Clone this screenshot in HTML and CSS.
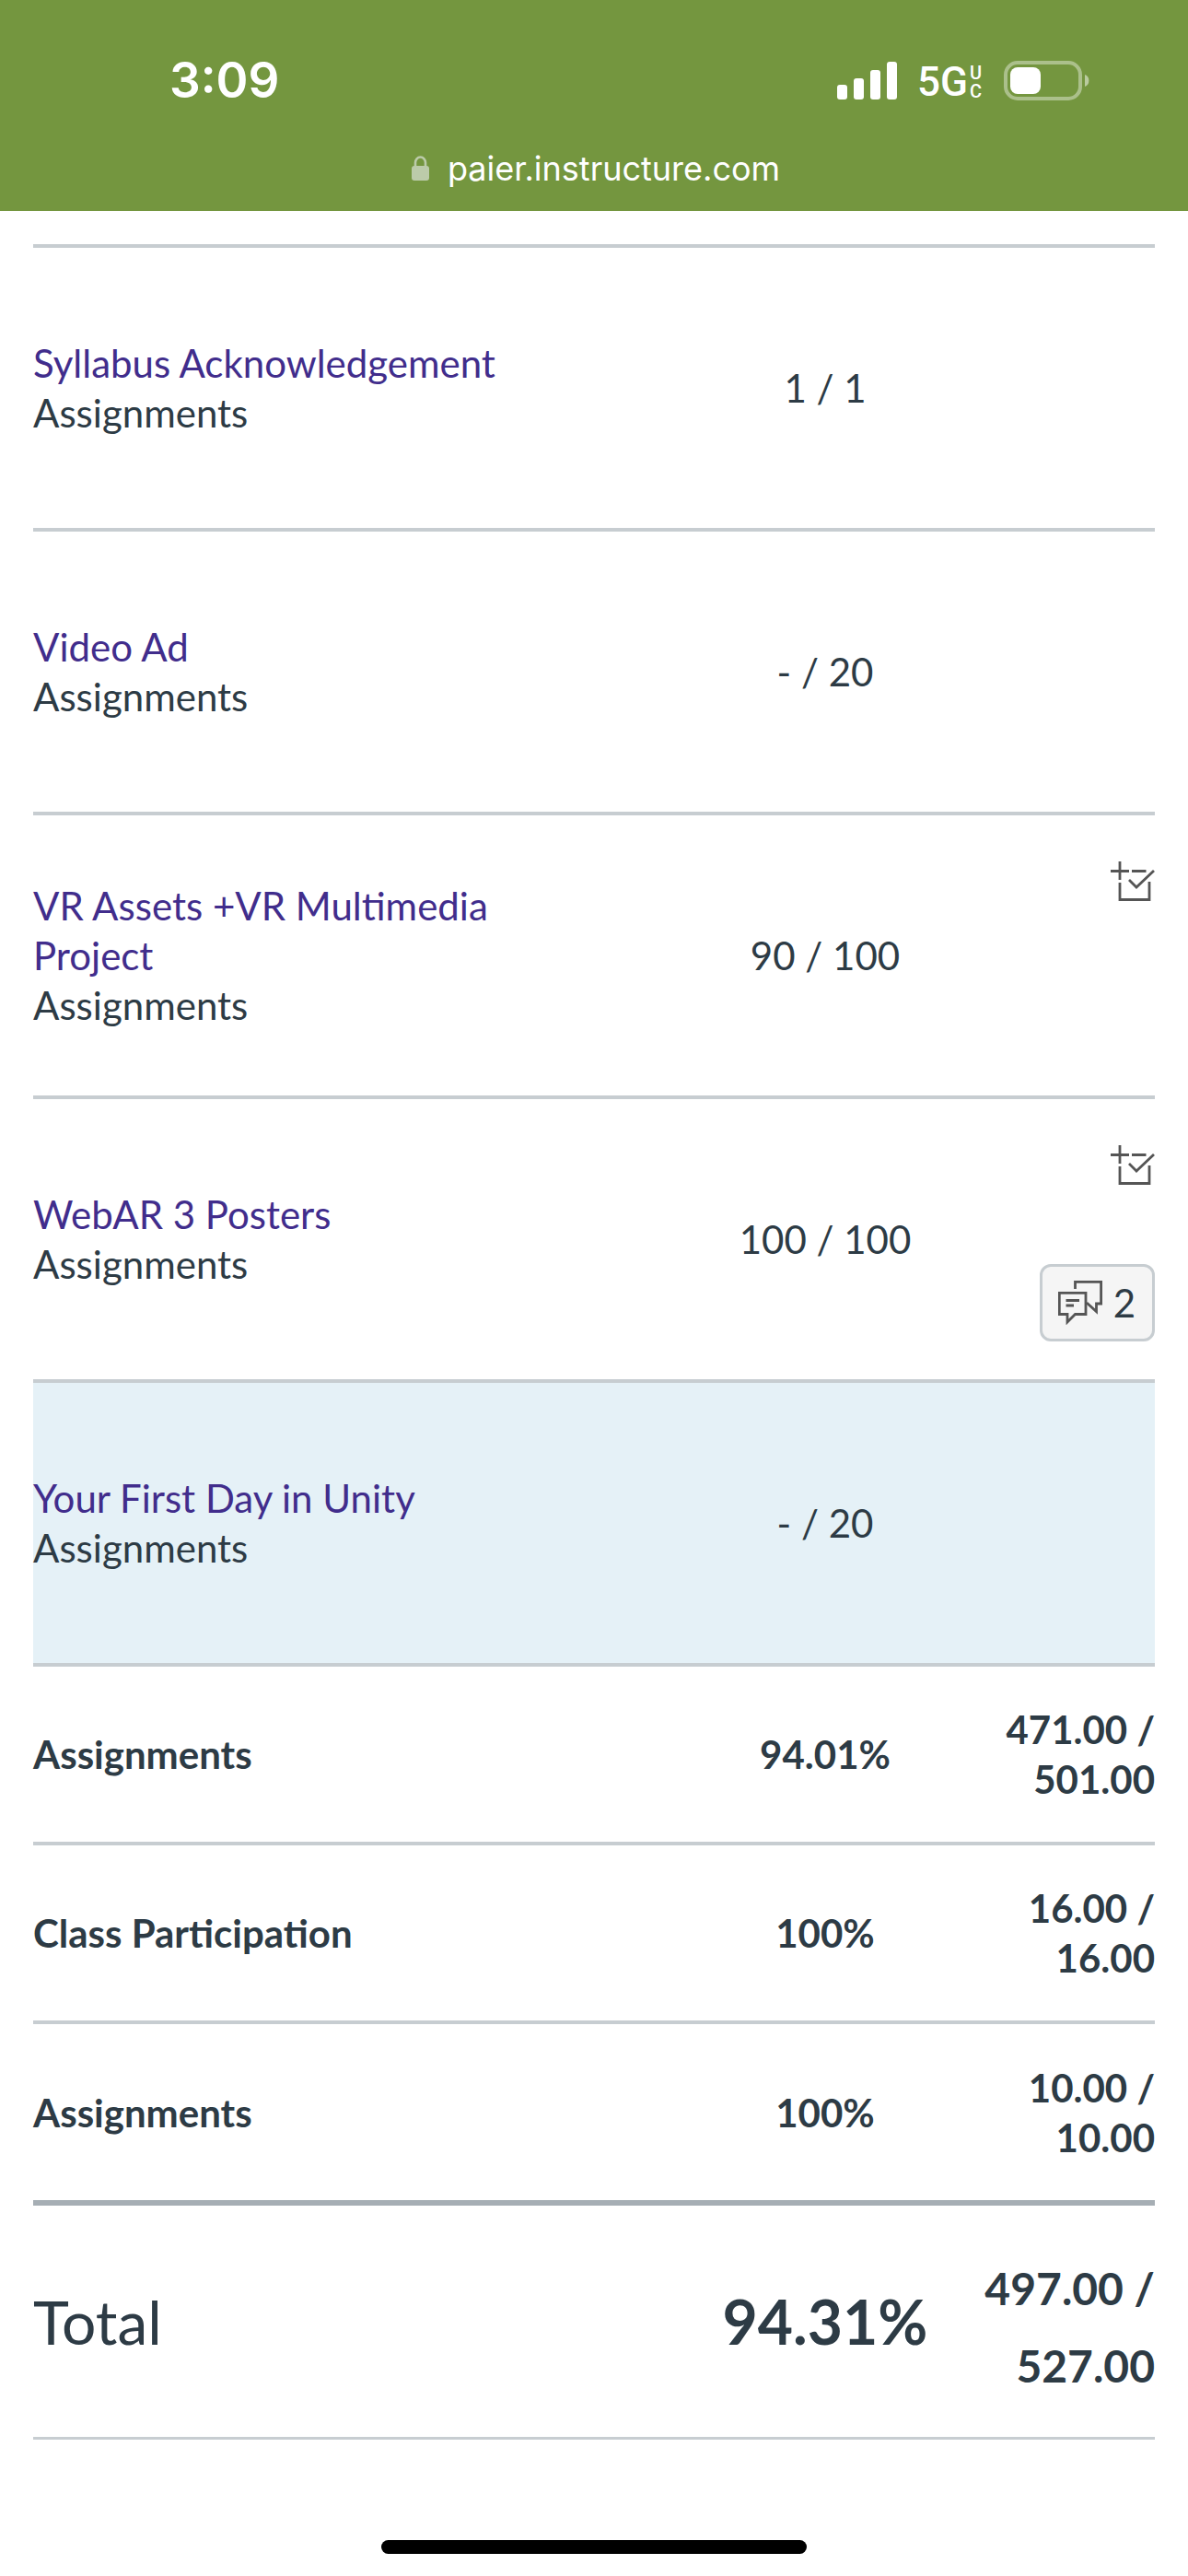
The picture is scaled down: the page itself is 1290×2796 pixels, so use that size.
FILE: index.html
```html
<!DOCTYPE html>
<html lang="en">
<head>
    <meta charset="utf-8">
    <meta name="viewport" content="width=device-width, initial-scale=1">
    <title>Grades</title>
    <link rel="stylesheet" href="styles.css">
</head>
<body>
<svg class="sprite" width="0" height="0" aria-hidden="true">
    <symbol id="icon-rubric" viewBox="0 0 48 44">
        <path d="M0 10.500H20M10 0V20M23 10.500H38.500M10 23V41.500H42V22M20 20L28 28L47 10" fill="none" stroke="#555" stroke-width="2.800"/>
    </symbol>
    <symbol id="icon-comments" viewBox="0 0 48 48">
        <path d="M1.300 13.300H30V36.500H18.500L10 45V36.500H1.300Z" fill="none" stroke="#555" stroke-width="2.800"/>
        <path d="M18.500 9V1.300H46.600V25H41.500V33.500L31 24M8.500 21.500H23M8.500 27H17" fill="none" stroke="#555" stroke-width="2.800"/>
    </symbol>
</svg>
<header class="top-bar">
    <div class="status">
        <span class="time">3:09</span>
        <div class="indicators">
            <svg class="signal" width="65" height="42" viewBox="0 0 65 42" fill="#fff">
                <rect x="0" y="26" width="11" height="16" rx="3"/>
                <rect x="18" y="19" width="11" height="23" rx="3"/>
                <rect x="36" y="10" width="11" height="32" rx="3"/>
                <rect x="54" y="1" width="11" height="41" rx="3"/>
            </svg>
            <div class="network">5G<span class="uc"><span>U</span><span>C</span></span></div>
            <svg class="battery" width="94" height="43" viewBox="0 0 94 43">
                <rect x="2" y="2" width="81" height="39" rx="13" fill="none" stroke="#fff" stroke-opacity=".4" stroke-width="4"/>
                <rect x="7" y="7" width="33" height="29" rx="8" fill="#fff"/>
                <path d="M88 15a7 7 0 0 1 0 13z" fill="#fff" fill-opacity=".5"/>
            </svg>
        </div>
    </div>
    <div class="address">
        <svg width="19" height="28" viewBox="0 0 19 28">
            <path d="M4 12V7.500a5.500 6 0 0 1 11 0V12" fill="none" stroke="#bccbaa" stroke-width="2.600"/>
            <rect x="0" y="11" width="19" height="16" rx="3" fill="#bccbaa"/>
        </svg>
        <span>paier.instructure.com</span>
    </div>
</header>
<main>
    <table class="grades">
        <colgroup>
            <col>
            <col class="col-score">
            <col class="col-details">
        </colgroup>
        <tbody class="assignments">
            <tr>
                <th scope="row"><a href="#syllabus">Syllabus Acknowledgement</a><div>Assignments</div></th>
                <td class="score">1 / 1</td>
                <td class="details"></td>
            </tr>
            <tr>
                <th scope="row"><a href="#video-ad">Video Ad</a><div>Assignments</div></th>
                <td class="score">- / 20</td>
                <td class="details"></td>
            </tr>
            <tr>
                <th scope="row"><a href="#vr-assets">VR Assets +VR Multimedia Project</a><div>Assignments</div></th>
                <td class="score">90 / 100</td>
                <td class="details">
                    <div class="tools">
                        <button class="rubric" aria-label="Toggle rubric"><svg width="48" height="44"><use href="#icon-rubric"/></svg></button>
                    </div>
                </td>
            </tr>
            <tr>
                <th scope="row"><a href="#webar">WebAR 3 Posters</a><div>Assignments</div></th>
                <td class="score">100 / 100</td>
                <td class="details">
                    <div class="tools">
                        <button class="rubric" aria-label="Toggle rubric"><svg width="48" height="44"><use href="#icon-rubric"/></svg></button>
                        <button class="comments" aria-label="2 comments"><svg width="48" height="48"><use href="#icon-comments"/></svg>2</button>
                    </div>
                </td>
            </tr>
            <tr class="active">
                <th scope="row"><a href="#first-day">Your First Day in Unity</a><div>Assignments</div></th>
                <td class="score">- / 20</td>
                <td class="details"></td>
            </tr>
        </tbody>
        <tbody class="groups">
            <tr>
                <th scope="row">Assignments</th>
                <td class="score">94.01%</td>
                <td class="points">471.00 / 501.00</td>
            </tr>
            <tr>
                <th scope="row">Class Participation</th>
                <td class="score">100%</td>
                <td class="points">16.00 / 16.00</td>
            </tr>
            <tr>
                <th scope="row">Assignments</th>
                <td class="score">100%</td>
                <td class="points">10.00 / 10.00</td>
            </tr>
        </tbody>
        <tfoot>
            <tr>
                <th scope="row">Total</th>
                <td class="score">94.31%</td>
                <td class="points">497.00 / 527.00</td>
            </tr>
        </tfoot>
    </table>
</main>
<div class="home-bar"></div>
</body>
</html>
```
FILE: styles.css
```css
* {
    box-sizing: border-box;
}
body {
    margin: 0;
    min-height: 100vh;
    display: flex;
    flex-direction: column;
    background: #fff;
    color: #2d3b45;
    font: 42px/54px Lato, sans-serif;
}
svg {
    display: block;
}
.sprite {
    position: absolute;
}

/* phone bar */
.top-bar {
    background: #74963f;
    color: #fff;
    height: 229px;
    padding-top: 56px;
    font-family: Inter, sans-serif;
}
.status {
    display: flex;
    justify-content: space-between;
    align-items: center;
    height: 62px;
    padding: 0 106px 0 184px;
}
.time {
    font-size: 53px;
    font-weight: 600;
}
.indicators {
    display: flex;
    align-items: center;
}
.network {
    display: flex;
    align-items: center;
    margin: 4px 24px 0 22px;
    font: 500 44px/44px Roboto, sans-serif;
}
.uc {
    display: flex;
    flex-direction: column;
    font-size: 20px;
    line-height: 20px;
    padding-left: 2px;
}
.address {
    display: flex;
    justify-content: center;
    align-items: center;
    gap: 20px;
    height: 60px;
    margin-top: 36px;
    padding: 0 0 2px 4px;
    font-size: 36px;
}

/* grades table */
main {
    flex: 1;
    padding: 36px 36px 0;
}
.grades {
    width: 100%;
    table-layout: fixed;
    border-collapse: separate;
    border-spacing: 0;
    border-top: 4px solid #c7cdd1;
}
.col-score {
    width: 318px;
}
.col-details {
    width: 199px;
}
th, td {
    padding: 0;
    border-bottom: 4px solid #c7cdd1;
    vertical-align: middle;
}
th {
    text-align: left;
    font-weight: 400;
    padding-right: 100px;
}
a {
    color: #412d8c;
    text-decoration: none;
}
.score {
    text-align: center;
}
.points {
    text-align: right;
}
.assignments tr {
    height: 308px;
}
.active {
    background: #e5f1f7;
}
.assignments .details {
    vertical-align: top;
    padding-top: 50px;
}
.tools {
    display: flex;
    flex-direction: column;
    align-items: flex-end;
    gap: 85px;
}
button {
    font: inherit;
    color: inherit;
    cursor: pointer;
}
.rubric {
    padding: 0;
    border: 0;
    background: none;
}
.comments {
    display: flex;
    align-items: center;
    gap: 12px;
    height: 84px;
    padding: 0 18px 0 17px;
    border: 3px solid #c7cdd1;
    border-radius: 12px;
    background: #f5f5f5;
}
.groups tr {
    height: 194px;
}
.groups th, .groups td, tfoot td {
    font-weight: 700;
}
.groups tr:last-child {
    height: 197px;
}
.groups tr:last-child > * {
    border-bottom: 6px solid #a6aeb4;
}
tfoot tr {
    height: 254px;
}
tfoot th, tfoot td {
    border-bottom-width: 3px;
    font-size: 66px;
    line-height: 84px;
}
tfoot .points {
    padding-top: 12px;
    font-size: 48px;
}

.home-bar {
    align-self: center;
    width: 462px;
    height: 15px;
    margin: 40px 0 24px;
    border-radius: 8px;
    background: #000;
}
```
